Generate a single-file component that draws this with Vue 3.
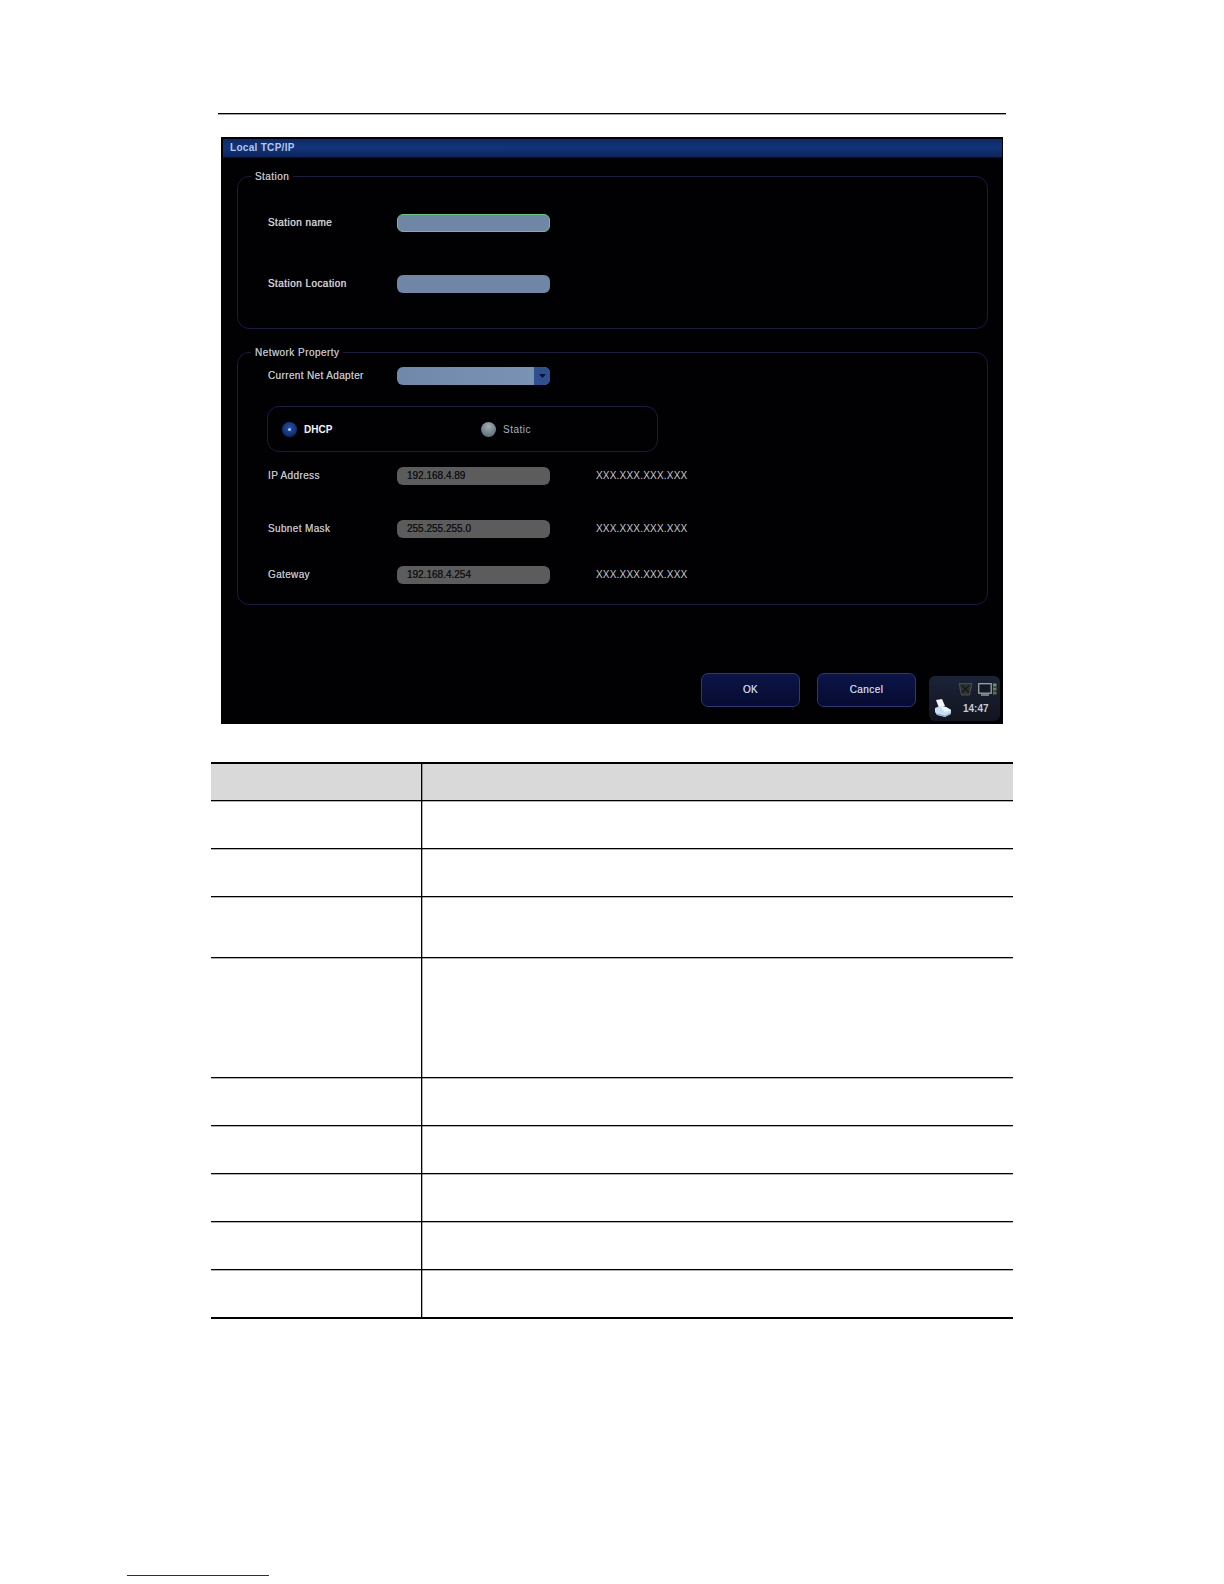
<script setup>
const rowHeights = [48, 48, 61, 120, 48, 48, 48, 48, 47]
const ipRows = [
  { label: 'IP Address', value: '192.168.4.89', gap: 'gap-ip' },
  { label: 'Subnet Mask', value: '255.255.255.0', gap: 'gap-mask' },
  { label: 'Gateway', value: '192.168.4.254', gap: 'gap-gw' }
]
</script>

<template>
  <div class="page">
    <div class="top-rule"></div>

    <section class="shot">
      <header class="titlebar">Local TCP/IP</header>

      <fieldset class="group station">
        <legend class="legend">Station</legend>
        <div class="field">
          <span class="label strong">Station name</span>
          <div class="input focused"></div>
        </div>
        <div class="field second">
          <span class="label strong">Station Location</span>
          <div class="input"></div>
        </div>
      </fieldset>

      <fieldset class="group network">
        <legend class="legend">Network Property</legend>
        <div class="field">
          <span class="label">Current Net Adapter</span>
          <div class="input select">
            <span class="select-btn">
              <svg width="9" height="6" viewBox="0 0 9 6"><path d="M1 1h7L4.5 5z" fill="#0b1230" /></svg>
            </span>
          </div>
        </div>

        <div class="radios">
          <div class="radio-item dhcp">
            <span class="radio on"><i></i></span>
            <span class="radio-text on-text">DHCP</span>
          </div>
          <div class="radio-item">
            <span class="radio off"></span>
            <span class="radio-text">Static</span>
          </div>
        </div>

        <div v-for="r in ipRows" :key="r.label" class="field" :class="r.gap">
          <span class="label">{{ r.label }}</span>
          <div class="input readonly">{{ r.value }}</div>
          <span class="mask">XXX.XXX.XXX.XXX</span>
        </div>
      </fieldset>

      <footer class="actions">
        <button class="btn">OK</button>
        <button class="btn">Cancel</button>
        <div class="tray">
          <svg class="tray-bin" width="15" height="14" viewBox="0 0 15 14">
            <path d="M1 1.5h13l-2.5 11.5h-8z" fill="#2e3330" stroke="#4a4f4a" />
            <path d="M4 3.5l7 7M11 3.5l-7 7" stroke="#15171a" stroke-width="1.2" />
          </svg>
          <svg class="tray-monitor" width="19" height="13" viewBox="0 0 19 13">
            <rect x="0.7" y="0.7" width="12.5" height="9.5" fill="#141a24" stroke="#9aa4a8" stroke-width="1.3" />
            <path d="M3 12h8" stroke="#9aa4a8" stroke-width="1.4" />
            <rect x="15" y="0.5" width="3.5" height="3" fill="#7f8c55" />
            <rect x="15" y="4.5" width="3.5" height="3" fill="#6f8048" />
            <rect x="15" y="8.5" width="3.5" height="3" fill="#627340" />
          </svg>
          <svg class="tray-printer" width="18" height="18" viewBox="0 0 18 18">
            <path d="M2 1l6-1 3 7-6 2z" fill="#f2f6fb" />
            <path d="M1 9l5-2 6 1 5 3v4l-6 3-8-2-2-3z" fill="#c9e0f4" />
            <path d="M6 7l6 1 5 3-6 2z" fill="#eef5fb" />
            <path d="M3 15l8 2 6-3" fill="none" stroke="#7fa8cc" />
          </svg>
          <span class="tray-time">14:47</span>
        </div>
      </footer>
    </section>

    <div class="table">
      <div class="row head"><div class="c1"></div><div class="c2"></div></div>
      <div
        v-for="(h, i) in rowHeights"
        :key="i"
        class="row"
        :style="{ height: h + 'px' }"
      ><div class="c1"></div><div class="c2"></div></div>
    </div>

    <div class="foot-link"></div>
  </div>
</template>

<style>
html, body { margin: 0; background: #fff; }
</style>

<style scoped>
.page {
  width: 1224px;
  height: 1584px;
  overflow: hidden;
  background: #fff;
  font-family: "Liberation Sans", Arial, sans-serif;
  display: flow-root;
}
.top-rule {
  width: 788px;
  height: 1px;
  margin: 113px 0 0 218px;
  background: #000;
  box-shadow: 0 1px 0 rgba(0, 0, 0, 0.35);
}
.shot {
  width: 782px;
  height: 587px;
  margin: 23px 0 0 221px;
  background: #010104;
  display: flow-root;
}
.titlebar {
  height: 18px;
  margin: 2px 1px 0 2px;
  padding-left: 7px;
  line-height: 18px;
  font-size: 10px;
  font-weight: bold;
  letter-spacing: 0.3px;
  color: #b4c6e6;
  background: linear-gradient(#0d2a68, #123478 45%, #0c2660);
  border-bottom: 1px solid #0a1030;
}
.group {
  position: relative;
  box-sizing: border-box;
  width: 751px;
  margin: 0 0 0 16px;
  padding: 0 0 0 30px;
  border: 1px solid #181b42;
  border-radius: 12px;
  min-width: 0;
}
.legend {
  position: absolute;
  top: -7px;
  left: 13px;
  padding: 0 4px;
  background: #010104;
  font-size: 10px;
  line-height: 13px;
  letter-spacing: 0.45px;
  color: #b8bcc0;
  text-shadow: 0 0 0.6px #b8bcc0;
}
.station { height: 153px; margin-top: 18px; padding-top: 37px; }
.network { height: 253px; margin-top: 23px; padding-top: 14px; }
.field {
  display: flex;
  align-items: center;
  height: 18px;
}
.second { margin-top: 43px; }
.gap-ip { margin-top: 15px; }
.gap-mask { margin-top: 35px; }
.gap-gw { margin-top: 28px; }
.label {
  width: 129px;
  flex: none;
  padding-bottom: 2px;
  font-size: 10px;
  letter-spacing: 0.36px;
  color: #bcbfc2;
  text-shadow: 0 0 0.6px #bcbfc2;
}
.label.strong { color: #cfd1d3; letter-spacing: 0.44px; text-shadow: 0 0 0.7px #cfd1d3; }
.input {
  box-sizing: border-box;
  position: relative;
  width: 153px;
  height: 18px;
  flex: none;
  border-radius: 6px;
  background: #6f86a6;
}
.input.focused { border: 1px solid #62c878; }
.select {
  background: linear-gradient(90deg, #7089ab, #7b93b5);
  overflow: hidden;
}
.select-btn {
  position: absolute;
  top: 0;
  right: 0;
  width: 16px;
  height: 18px;
  display: flex;
  align-items: center;
  justify-content: center;
  background: #2f4f90;
}
.readonly {
  background: #5c5c5c;
  padding-left: 10px;
  font-size: 10px;
  line-height: 17px;
  letter-spacing: 0;
  color: #121316;
  text-shadow: 0 0 0.5px #121316;
}
.mask {
  margin-left: 46px;
  padding-bottom: 2px;
  font-size: 10px;
  letter-spacing: 0.2px;
  color: #c8c8cc;
}
.radios {
  box-sizing: border-box;
  width: 391px;
  height: 46px;
  margin: 21px 0 0 -1px;
  border: 1px solid #181b42;
  border-radius: 12px;
  display: flex;
  align-items: center;
  padding-left: 14px;
}
.radio-item {
  display: flex;
  align-items: center;
  gap: 7px;
}
.dhcp { width: 199px; }
.radio {
  width: 15px;
  height: 15px;
  border-radius: 50%;
  display: flex;
  align-items: center;
  justify-content: center;
}
.radio.on { background: radial-gradient(circle at 50% 40%, #2554a6, #0c2566 80%); }
.radio.on i {
  width: 3px;
  height: 3px;
  border-radius: 50%;
  background: #b8cdf0;
}
.radio.off { background: radial-gradient(circle at 50% 30%, #a0adb4, #5c6a74 85%); }
.radio-text {
  font-size: 10px;
  letter-spacing: 0.5px;
  color: #aab0b8;
}
.on-text { color: #f2f4f8; font-weight: bold; letter-spacing: 0; }
.actions {
  display: flex;
  align-items: flex-start;
  justify-content: flex-end;
  margin-top: 68px;
  padding-right: 3px;
}
.btn {
  box-sizing: border-box;
  width: 99px;
  height: 34px;
  margin-right: 17px;
  border: 1px solid #2a3a78;
  border-radius: 7px;
  background: linear-gradient(#0c1548, #060b30);
  color: #c0cde4;
  font-family: inherit;
  font-size: 10px;
  letter-spacing: 0.4px;
  padding: 0 0 2px;
  text-shadow: 0 0 0.6px #c0cde4;
}
.btn:nth-child(2) { margin-right: 13px; }
.tray {
  position: relative;
  width: 71px;
  height: 45px;
  margin-top: 3px;
  border-radius: 6px;
  background: linear-gradient(#1b2338, #12151f);
}
.tray-bin { position: absolute; left: 29px; top: 6px; }
.tray-monitor { position: absolute; left: 49px; top: 7px; }
.tray-printer { position: absolute; left: 5px; top: 23px; }
.tray-time {
  position: absolute;
  left: 34px;
  top: 26px;
  font-size: 10px;
  font-weight: bold;
  line-height: 13px;
  color: #c4ccd4;
}
.table {
  width: 802px;
  margin: 38px 0 0 211px;
  border-top: 2px solid #000;
  border-bottom: 2px solid #000;
}
.row {
  box-sizing: border-box;
  display: flex;
  border-bottom: 1px solid #000;
  box-shadow: 0 1px 0 rgba(0, 0, 0, 0.3);
}
.row:last-child { border-bottom: 0; box-shadow: none; }
.head {
  height: 37px;
  background: #d9d9d9;
}
.c1 {
  width: 210px;
  flex: none;
  border-right: 1px solid #000;
  box-shadow: 1px 0 0 rgba(0, 0, 0, 0.3);
}
.c2 { flex: 1; }
.foot-link {
  width: 142px;
  height: 1px;
  margin: 256px 0 0 127px;
  background: #1a2a8c;
}
</style>
